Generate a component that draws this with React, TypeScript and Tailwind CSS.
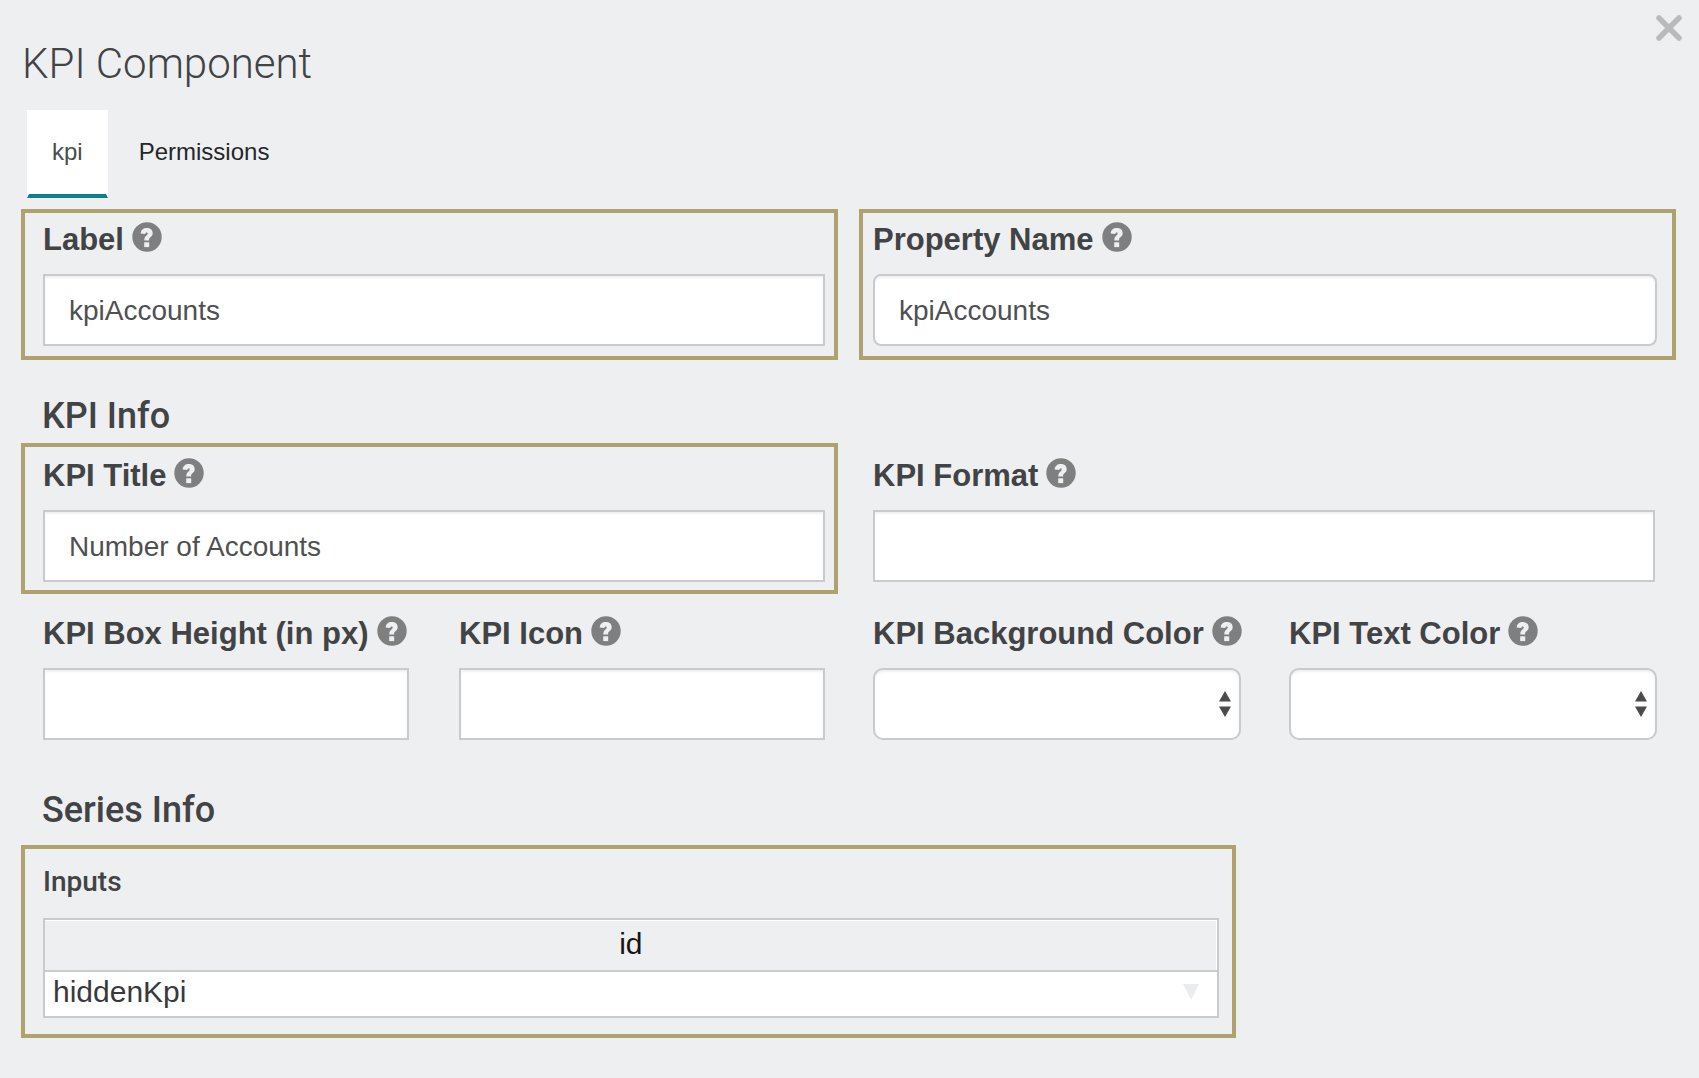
import { useState } from "react";
import type { ReactNode } from "react";

const controlBase =
  "block h-[72px] w-full border-2 border-[#c8cacc] bg-white px-6 pt-[2px] text-[28px] text-[#4f5052] shadow-[inset_0_2px_2px_rgba(0,0,0,0.06)] outline-none";

function HelpIcon() {
  return (
    <svg viewBox="0 0 30 30" className="mb-[6px] size-[30px] shrink-0" aria-hidden="true">
      <circle cx="15" cy="15" r="14.7" fill="#7f7f80" />
      <path
        d="M8.700 11.600C8.900 8 11.200 6.100 14.800 6.100C18.300 6.100 20.700 8 20.700 11.100C20.700 13.300 19.700 14.500 18.200 15.500C17.300 16.100 17.100 16.700 17.100 18.400H12.300C12.300 16 12.900 14.600 14.400 13.500C15.300 12.800 15.700 12.300 15.700 11.500C15.700 10.800 15.300 10.400 14.700 10.400C13.800 10.400 13.400 10.900 13.300 11.900Z"
        fill="#eeeff1"
      />
      <rect x="12.200" y="20.300" width="5" height="4.800" fill="#eeeff1" />
    </svg>
  );
}

function Field({ id, label, children }: { id: string; label: string; children: ReactNode }) {
  return (
    <div className="flex min-w-0 flex-1 flex-col gap-4">
      <div className="flex h-9 items-center gap-2 whitespace-nowrap">
        <label htmlFor={id} className="text-[31px] leading-9 font-bold text-[#424345]">
          {label}
        </label>
        <HelpIcon />
      </div>
      {children}
    </div>
  );
}

function TextField({ id, label, value = "", rounded = false }: { id: string; label: string; value?: string; rounded?: boolean }) {
  return (
    <Field id={id} label={label}>
      <input id={id} type="text" defaultValue={value} className={controlBase + (rounded ? " rounded-lg" : "")} />
    </Field>
  );
}

function SelectField({ id, label }: { id: string; label: string }) {
  return (
    <Field id={id} label={label}>
      <div className="relative">
        <select id={id} className={controlBase + " appearance-none rounded-[10px]"}>
          <option value=""></option>
        </select>
        <svg viewBox="0 0 12 26" className="pointer-events-none absolute top-[23px] right-[10px] h-[26px] w-3" aria-hidden="true">
          <path d="M6 0L12 10.500H0ZM6 26L12 15.500H0Z" fill="#4b4b4c" />
        </svg>
      </div>
    </Field>
  );
}

const tabs = ["kpi", "Permissions"];

export default function App() {
  const [active, setActive] = useState("kpi");
  return (
    <main className="min-h-screen bg-[#eeeff1] pr-[23px] pl-[21px] font-['Liberation_Sans',Arial,sans-serif] text-[#424345]">
      <header className="flex items-start justify-between pb-[22px]">
        <h1 className="pt-10 pl-px font-[Roboto,sans-serif] text-[42px] leading-[48px] font-light">KPI Component</h1>
        <button type="button" aria-label="Close" className="-mr-2 p-[2px] pt-[15px]">
          <svg viewBox="0 0 26 26" className="size-[26px]" aria-hidden="true">
            <path d="M3 3L23 23M23 3L3 23" stroke="#b9babb" strokeWidth="5.500" strokeLinecap="round" />
          </svg>
        </button>
      </header>

      <div role="tablist" className="flex gap-[6px] pl-[6px]">
        {tabs.map((tab) => (
          <button
            key={tab}
            type="button"
            role="tab"
            aria-selected={tab === active}
            onClick={() => setActive(tab)}
            className={
              "h-[88px] border-x-2 border-b-4 px-[23px] text-2xl " +
              (tab === active
                ? "border-x-white border-b-[#0e7f92] bg-white text-[#4b4c4e]"
                : "border-transparent text-[#252628]")
            }
          >
            {tab}
          </button>
        ))}
      </div>

      <div className="mt-[11px] grid grid-cols-2 items-start gap-x-[21px]">
        <div className="border-4 border-[#b0a26f] pt-[9px] pr-[9px] pb-[10px] pl-[18px]">
          <TextField id="label" label="Label" value="kpiAccounts" />
        </div>
        <div className="border-4 border-[#b0a26f] pt-[9px] pr-[15px] pb-[10px] pl-[10px]">
          <TextField id="property-name" label="Property Name" value="kpiAccounts" rounded />
        </div>
      </div>

      <section>
        <h2 className="mt-[34px] mb-[5px] pl-[21px] font-[Roboto,sans-serif] text-[36px] leading-[44px] font-medium">KPI Info</h2>
        <div className="grid grid-cols-2 items-start gap-x-[21px] gap-y-[22px]">
          <div className="border-4 border-[#b0a26f] pt-[11px] pr-[9px] pb-2 pl-[18px]">
            <TextField id="kpi-title" label="KPI Title" value="Number of Accounts" />
          </div>
          <div className="pt-[15px] pr-[21px] pl-[14px]">
            <TextField id="kpi-format" label="KPI Format" />
          </div>
          <div className="flex gap-[50px] pr-[13px] pl-[22px]">
            <TextField id="kpi-height" label="KPI Box Height (in px)" />
            <TextField id="kpi-icon" label="KPI Icon" />
          </div>
          <div className="flex gap-12 pr-[19px] pl-[14px]">
            <SelectField id="kpi-background" label="KPI Background Color" />
            <SelectField id="kpi-text" label="KPI Text Color" />
          </div>
        </div>
      </section>

      <section>
        <h2 className="mt-12 mb-[13px] pl-[21px] font-[Roboto,sans-serif] text-[36px] leading-[44px] font-medium">Series Info</h2>
        <div className="w-[73.4%] border-4 border-[#b0a26f] pt-[17px] pr-[13px] pb-4 pl-[18px]">
          <h3 id="inputs-heading" className="mb-5 font-[Roboto,sans-serif] text-[28px] leading-8 font-medium">
            Inputs
          </h3>
          <table aria-labelledby="inputs-heading" className="w-full border-separate border-spacing-0 border-2 border-[#c8cacc] text-[30px] leading-9">
            <thead>
              <tr>
                <th scope="col" className="border-b-2 border-[#c8cacc] pt-[6px] pb-2 text-center font-normal text-[#151617] shadow-[inset_-1px_1px_0_#fff]">
                  id
                </th>
              </tr>
            </thead>
            <tbody>
              <tr>
                <td className="bg-white pt-[2px] pr-[18px] pb-[6px] pl-2 text-[#39393b]">
                  <div className="flex items-center justify-between">
                    hiddenKpi
                    <svg viewBox="0 0 16 16" className="size-4" aria-hidden="true">
                      <path d="M0 0H16L8 16Z" fill="#ebecee" />
                    </svg>
                  </div>
                </td>
              </tr>
            </tbody>
          </table>
        </div>
      </section>
    </main>
  );
}
